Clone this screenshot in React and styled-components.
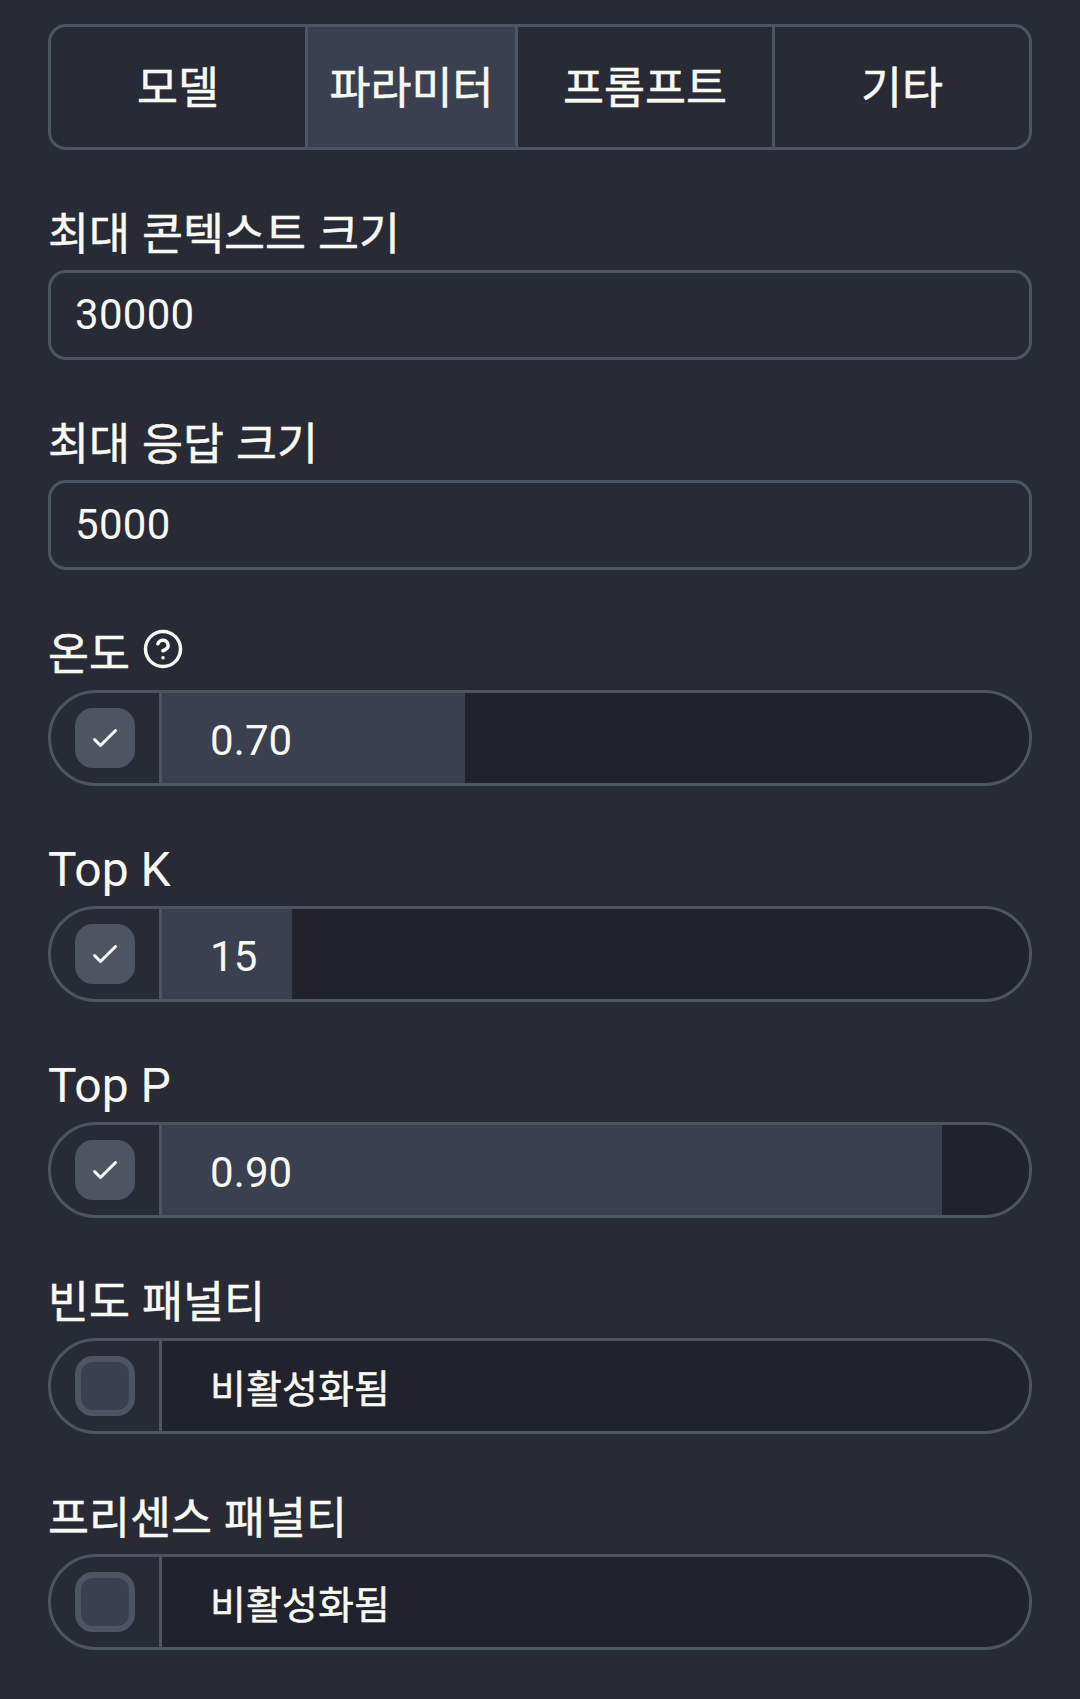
import React, { useState } from 'react';
import styled, { createGlobalStyle } from 'styled-components';
import { CircleHelp } from 'lucide-react';

const tabs = ["모델","파라미터","프롬프트","기타"]

const sliders = [
    {name:"온도", help:true, max:2, digits:2, value:0.7, enabled:true},
    {name:"Top K", max:100, digits:0, value:15, enabled:true},
    {name:"Top P", max:1, digits:2, value:0.9, enabled:true},
    {name:"빈도 패널티", max:2, digits:2, value:0, enabled:false},
    {name:"프리센스 패널티", max:2, digits:2, value:0, enabled:false},
]

function isKorean(text){
    return /[가-힣]/.test(text)
}

function Text({children}){
    return isKorean(children) ? <Korean>{children}</Korean> : <>{children}</>
}

function SliderField({slider}){
    const [enabled, setEnabled] = useState(slider.enabled)
    const percent = enabled ? slider.value / slider.max * 100 : 0
    return(
        <Field>
            <Label>
                <Text>{slider.name}</Text>
                {slider.help && <HelpIcon size={42} />}
            </Label>
            <SliderBox>
                <CheckCell>
                    <Check $checked={enabled} onClick={()=>setEnabled(!enabled)}>
                        {enabled && (
                            <svg width="36" height="36" viewBox="0 0 24 24" fill="none" stroke="#ffffff" strokeWidth="2" strokeLinecap="round" strokeLinejoin="round">
                                <path d="M5 13l4 4L19 7" />
                            </svg>
                        )}
                    </Check>
                </CheckCell>
                <Track style={{backgroundSize:`${percent}% 100%`}}>
                    <Text>{enabled ? slider.value.toFixed(slider.digits) : "비활성화됨"}</Text>
                </Track>
            </SliderBox>
        </Field>
    )
}

export default function App(){
    const [selected, setSelected] = useState(1)
    const [context, setContext] = useState("30000")
    const [response, setResponse] = useState("5000")

    return(
        <Settings>
            <GlobalStyle />
            <Tabs>
                {tabs.map((tab,index) => (
                    <Tab key={tab} $selected={index===selected} onClick={()=>setSelected(index)}>
                        <Text>{tab}</Text>
                    </Tab>
                ))}
            </Tabs>
            <Field>
                <Label><Text>최대 콘텍스트 크기</Text></Label>
                <Input value={context} onChange={(e)=>setContext(e.target.value)} />
            </Field>
            <Field>
                <Label><Text>최대 응답 크기</Text></Label>
                <Input value={response} onChange={(e)=>setResponse(e.target.value)} />
            </Field>
            {sliders.map(slider => <SliderField key={slider.name} slider={slider} />)}
        </Settings>
    )
}

const GlobalStyle = createGlobalStyle`
*{
    box-sizing:border-box;
}
body{
    margin:0;
    background:#282a36;
    color:#f8f8f2;
    font-family:Roboto, 'Noto Sans CJK KR', sans-serif;
    font-size:48px;
    line-height:72px;
}
`

const Settings = styled.div`
    min-height:1699px;
    padding:24px 48px 48px;
`

// hangul is drawn a little smaller than the latin text next to it
const Korean = styled.span`
    font-family:'Noto Sans CJK KR', sans-serif;
    font-size:0.929em;
    line-height:0;
    word-spacing:2px;
    -webkit-text-stroke:0.5px #f8f8f2;
`

const Tabs = styled.nav`
    display:grid;
    grid-template-columns:257px 210px 257px 1fr;
    height:126px;
    border:3px solid #4d5562;
    border-radius:18px;
    overflow:hidden;
`

const Tab = styled.button`
    padding:1px 0 0;
    border:0;
    border-right:3px solid #4d5562;
    background:${props => props.$selected ? "#3a404f" : "transparent"};
    color:inherit;
    font:inherit;
    cursor:pointer;
    &:last-child{
        border-right:0;
    }
`

const Field = styled.div`
    margin-top:48px;
`

const Label = styled.div`
    height:72px;
    white-space:nowrap;
`

const HelpIcon = styled(CircleHelp)`
    margin:10px 0 0 12px;
    vertical-align:top;
`

const Input = styled.input`
    display:block;
    width:100%;
    height:90px;
    padding:0 24px 2px;
    border:3px solid #4d5562;
    border-radius:18px;
    outline:none;
    background:transparent;
    color:inherit;
    font-family:inherit;
    font-size:42px;
    letter-spacing:0.3px;
`

const SliderBox = styled.div`
    display:flex;
    height:96px;
    border:3px solid #4d5562;
    border-radius:48px;
    overflow:hidden;
`

const CheckCell = styled.div`
    display:flex;
    align-items:center;
    padding:0 24px;
    border-right:3px solid #4d5562;
`

const Check = styled.button`
    display:flex;
    align-items:center;
    justify-content:center;
    width:60px;
    height:60px;
    padding:0;
    border:6px solid #4d5562;
    border-radius:18px;
    background:${props => props.$checked ? "#4d5562" : "#3a404f"};
    cursor:pointer;
`

const Track = styled.div`
    flex:1;
    padding:3px 48px 0;
    background:#21222c linear-gradient(#3a404f, #3a404f) no-repeat 0 0;
    font-size:42px;
    line-height:90px;
    letter-spacing:0.1px;
`
